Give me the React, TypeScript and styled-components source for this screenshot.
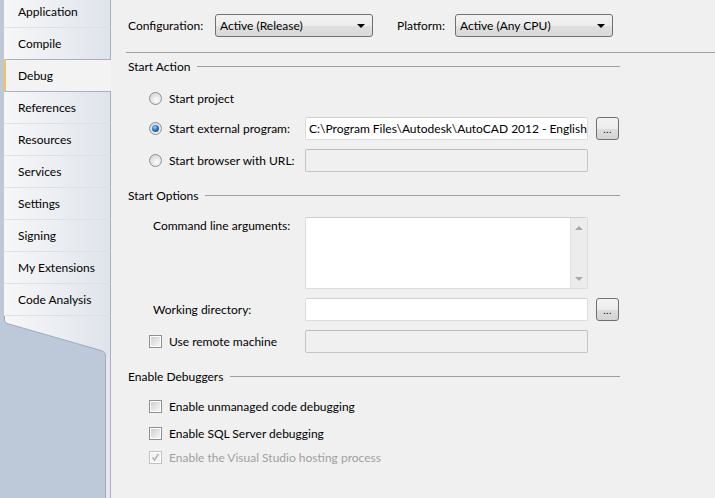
import styled, { createGlobalStyle } from 'styled-components';

const GlobalStyle = createGlobalStyle`
  html, body {
    margin: 0;
    padding: 0;
    background: #f0f0f0;
  }
  * {
    box-sizing: border-box;
  }
`;

const Page = styled.div`
  display: flex;
  width: 715px;
  height: 498px;
  overflow: hidden;
  font-family: 'Lato', 'Noto Sans', sans-serif;
  font-size: 12px;
  color: #000;
`;

const Sidebar = styled.div`
  width: 111px;
  flex: none;
  display: flex;
  flex-direction: column;
  padding-left: 4px;
  background: #bdc9d9;
`;

const TabList = styled.div`
  display: flex;
  flex-direction: column;
  margin-top: -4px;
`;

const Tab = styled.div<{ $active?: boolean }>`
  height: ${(p) => (p.$active ? '33px' : '32px')};
  margin-top: ${(p) => (p.$active ? '-1px' : '0')};
  display: flex;
  align-items: center;
  padding-left: ${(p) => (p.$active ? '12px' : '14px')};
  background: ${(p) =>
    p.$active ? '#f3f3f3' : 'linear-gradient(to right, #f7f7f8, #dfe4eb)'};
  border-right: ${(p) => (p.$active ? 'none' : '1px solid #a6b2c3')};
  border-bottom: 1px solid ${(p) => (p.$active ? '#a6b2c3' : '#dde1e7')};
  border-top: ${(p) => (p.$active ? '1px solid #a6b2c3' : 'none')};
  border-left: ${(p) => (p.$active ? '2px solid #f2c25c' : 'none')};
  border-top-left-radius: ${(p) => (p.$active ? '2px' : '0')};
  cursor: default;
`;

const Tail = styled.svg`
  display: block;
  flex: none;
`;

const Rail = styled.div`
  flex: 1;
  margin-left: 101px;
  background: #e4e8ee;
  border-left: 1px solid #9eabbd;
  border-right: 1px solid #a6b2c3;
`;

const Content = styled.div`
  flex: 1;
  display: flex;
  flex-direction: column;
  background: #f0f0f0;
`;

const TopBar = styled.div`
  height: 53px;
  flex: none;
  display: flex;
  align-items: center;
  margin-left: 15px;
  padding-left: 2px;
  padding-bottom: 1px;
  border-bottom: 1px solid #a0a0a0;
`;

const TopLabel = styled.span<{ $w: number }>`
  width: ${(p) => p.$w}px;
  flex: none;
`;

const Select = styled.div<{ $gap?: number }>`
  width: 158px;
  height: 23px;
  flex: none;
  margin-right: ${(p) => p.$gap ?? 0}px;
  display: flex;
  align-items: center;
  padding-left: 4px;
  border: 1px solid #707070;
  border-radius: 3px;
  background: linear-gradient(#f3f3f3, #ececec 50%, #e0e0e0 51%, #d8d8d8);
`;

const SelectText = styled.span`
  flex: 1;
`;

const Caret = styled.span`
  width: 0;
  height: 0;
  margin-right: 7px;
  border-left: 4px solid transparent;
  border-right: 4px solid transparent;
  border-top: 4px solid #000;
`;

const Body = styled.div`
  display: flex;
  flex-direction: column;
  padding-left: 17px;
  width: 509px;
`;

const Header = styled.div<{ $mt: number }>`
  height: 18px;
  margin-top: ${(p) => p.$mt}px;
  display: flex;
  align-items: center;
  gap: 7px;
`;

const HeaderLine = styled.div`
  flex: 1;
  height: 1px;
  background: #a0a0a0;
`;

const Row = styled.div<{ $mt: number; $top?: boolean }>`
  display: flex;
  align-items: ${(p) => (p.$top ? 'flex-start' : 'center')};
  margin-top: ${(p) => p.$mt}px;
  margin-left: 21px;
  min-height: 23px;
`;

const Lead = styled.div<{ $pad?: number }>`
  width: 156px;
  flex: none;
  display: flex;
  align-items: center;
  gap: 7px;
  padding-left: ${(p) => p.$pad ?? 0}px;
`;

const LeadLabel = styled.span<{ $pt?: number }>`
  padding-top: ${(p) => p.$pt ?? 0}px;
  line-height: 16px;
`;

const Field = styled.div<{ $disabled?: boolean; $h?: number }>`
  width: 283px;
  height: ${(p) => p.$h ?? 23}px;
  flex: none;
  display: flex;
  align-items: center;
  padding-left: 3px;
  overflow: hidden;
  white-space: nowrap;
  border: 1px solid ${(p) => (p.$disabled ? '#c5c5c5' : '#dcdcdc')};
  border-top-color: ${(p) => (p.$disabled ? '#bcbcbc' : '#d0d0d0')};
  border-radius: 2px;
  background: ${(p) => (p.$disabled ? '#f0f0f0' : '#ffffff')};
`;

const FieldText = styled.span`
  display: block;
  width: 278px;
  overflow: hidden;
  white-space: nowrap;
`;

const AreaField = styled(Field)`
  align-items: stretch;
  padding-left: 0;
  justify-content: flex-end;
`;

const ScrollTrack = styled.div`
  width: 17px;
  display: flex;
  flex-direction: column;
  justify-content: space-between;
  align-items: center;
  padding: 8px 0 7px;
  background: #ececec;
  border-left: 1px solid #e2e2e2;
`;

const ArrowUp = styled.span`
  width: 0;
  height: 0;
  border-left: 4px solid transparent;
  border-right: 4px solid transparent;
  border-bottom: 4px solid #a8a8a8;
`;

const ArrowDown = styled(ArrowUp)`
  border-bottom: none;
  border-top: 4px solid #a8a8a8;
`;

const Browse = styled.div`
  width: 23px;
  height: 23px;
  margin-left: 8px;
  flex: none;
  display: flex;
  align-items: flex-end;
  justify-content: center;
  padding-bottom: 5px;
  font-size: 10px;
  line-height: 10px;
  letter-spacing: 0.5px;
  border: 1px solid #707070;
  border-radius: 3px;
  background: linear-gradient(#f3f3f3, #ececec 50%, #dedede 51%, #d4d4d4);
`;

const Radio = styled.span<{ $on?: boolean }>`
  width: 13px;
  height: 13px;
  flex: none;
  border-radius: 50%;
  border: 1px solid #8e8f8f;
  background: radial-gradient(circle at 60% 65%, #fdfdfd 0%, #e2e2e2 55%, #cfcfcf 100%);
  display: flex;
  align-items: center;
  justify-content: center;

  &::after {
    content: '';
    display: ${(p) => (p.$on ? 'block' : 'none')};
    width: 7px;
    height: 7px;
    border-radius: 50%;
    background: radial-gradient(circle at 40% 35%, #8fd0ff 0%, #2a78c4 45%, #0d3c73 100%);
  }
`;

const Box = styled.span<{ $disabled?: boolean }>`
  width: 13px;
  height: 13px;
  flex: none;
  border: 1px solid ${(p) => (p.$disabled ? '#c2c2c2' : '#8e8f8f')};
  padding: 1px;
  background: #fff;
  display: flex;
`;

const BoxInner = styled.span<{ $disabled?: boolean }>`
  flex: 1;
  background: ${(p) =>
    p.$disabled ? '#f4f4f4' : 'linear-gradient(135deg, #cfcfcf, #f7f7f7)'};
  display: flex;
  align-items: center;
  justify-content: center;
`;

const CheckLabel = styled.span<{ $disabled?: boolean }>`
  color: ${(p) => (p.$disabled ? '#a0a0a0' : '#000')};
`;

const CheckRow = styled.div<{ $mt: number }>`
  display: flex;
  align-items: center;
  gap: 7px;
  height: 18px;
  margin-top: ${(p) => p.$mt}px;
  margin-left: 21px;
`;

const tabs = [
  'Application',
  'Compile',
  'Debug',
  'References',
  'Resources',
  'Services',
  'Settings',
  'Signing',
  'My Extensions',
  'Code Analysis',
];

function CheckBox({ disabled, checked }: { disabled?: boolean; checked?: boolean }) {
  return (
    <Box $disabled={disabled}>
      <BoxInner $disabled={disabled}>
        {checked && (
          <svg width="9" height="9" viewBox="0 0 9 9">
            <path d="M1.5 4.5 L3.5 7 L7.5 1" fill="none" stroke="#b0b0b0" strokeWidth="1.4" />
          </svg>
        )}
      </BoxInner>
    </Box>
  );
}

export default function App() {
  return (
    <>
      <GlobalStyle />
      <Page>
        <Sidebar>
          <TabList>
            {tabs.map((t) => (
              <Tab key={t} $active={t === 'Debug'}>
                {t}
              </Tab>
            ))}
          </TabList>
          <Tail width="107" height="42" viewBox="0 0 107 42">
            <defs>
              <linearGradient id="tailfill" x1="0" y1="0" x2="1" y2="0">
                <stop offset="0" stopColor="#f7f7f8" />
                <stop offset="1" stopColor="#dfe4eb" />
              </linearGradient>
            </defs>
            <path
              d="M0 0 H106 V42 H101.5 V40 Q101.5 36 97 34.5 L3 7.5 Q0.5 6.5 0.5 4 V0 Z"
              fill="url(#tailfill)"
            />
            <path
              d="M0.5 0 V4 Q0.5 6.5 3 7.5 L97 34.5 Q101.5 36 101.5 40 V42"
              fill="none"
              stroke="#9eabbd"
              strokeWidth="1"
            />
            <path d="M106.5 0 V42" stroke="#a6b2c3" strokeWidth="1" />
          </Tail>
          <Rail />
        </Sidebar>

        <Content>
          <TopBar>
            <TopLabel $w={87}>Configuration:</TopLabel>
            <Select $gap={24}>
              <SelectText>Active (Release)</SelectText>
              <Caret />
            </Select>
            <TopLabel $w={58}>Platform:</TopLabel>
            <Select>
              <SelectText>Active (Any CPU)</SelectText>
              <Caret />
            </Select>
          </TopBar>

          <Body>
            <Header $mt={4}>
              <span>Start Action</span>
              <HeaderLine />
            </Header>

            <Row $mt={12}>
              <Lead>
                <Radio />
                <span>Start project</span>
              </Lead>
            </Row>
            <Row $mt={7}>
              <Lead>
                <Radio $on />
                <span>Start external program:</span>
              </Lead>
              <Field>
                <FieldText>C:\Program Files\Autodesk\AutoCAD 2012 - English\</FieldText>
              </Field>
              <Browse>...</Browse>
            </Row>
            <Row $mt={9}>
              <Lead>
                <Radio />
                <span>Start browser with URL:</span>
              </Lead>
              <Field $disabled />
            </Row>

            <Header $mt={14}>
              <span>Start Options</span>
              <HeaderLine />
            </Header>

            <Row $mt={13} $top>
              <Lead $pad={4}>
                <LeadLabel $pt={1}>Command line arguments:</LeadLabel>
              </Lead>
              <AreaField $h={72}>
                <ScrollTrack>
                  <ArrowUp />
                  <ArrowDown />
                </ScrollTrack>
              </AreaField>
            </Row>
            <Row $mt={9}>
              <Lead $pad={4}>
                <LeadLabel>Working directory:</LeadLabel>
              </Lead>
              <Field />
              <Browse>...</Browse>
            </Row>
            <Row $mt={9}>
              <Lead>
                <CheckBox />
                <span>Use remote machine</span>
              </Lead>
              <Field $disabled />
            </Row>

            <Header $mt={14}>
              <span>Enable Debuggers</span>
              <HeaderLine />
            </Header>

            <CheckRow $mt={12}>
              <CheckBox />
              <CheckLabel>Enable unmanaged code debugging</CheckLabel>
            </CheckRow>
            <CheckRow $mt={9}>
              <CheckBox />
              <CheckLabel>Enable SQL Server debugging</CheckLabel>
            </CheckRow>
            <CheckRow $mt={6}>
              <CheckBox disabled checked />
              <CheckLabel $disabled>Enable the Visual Studio hosting process</CheckLabel>
            </CheckRow>
          </Body>
        </Content>
      </Page>
    </>
  );
}
